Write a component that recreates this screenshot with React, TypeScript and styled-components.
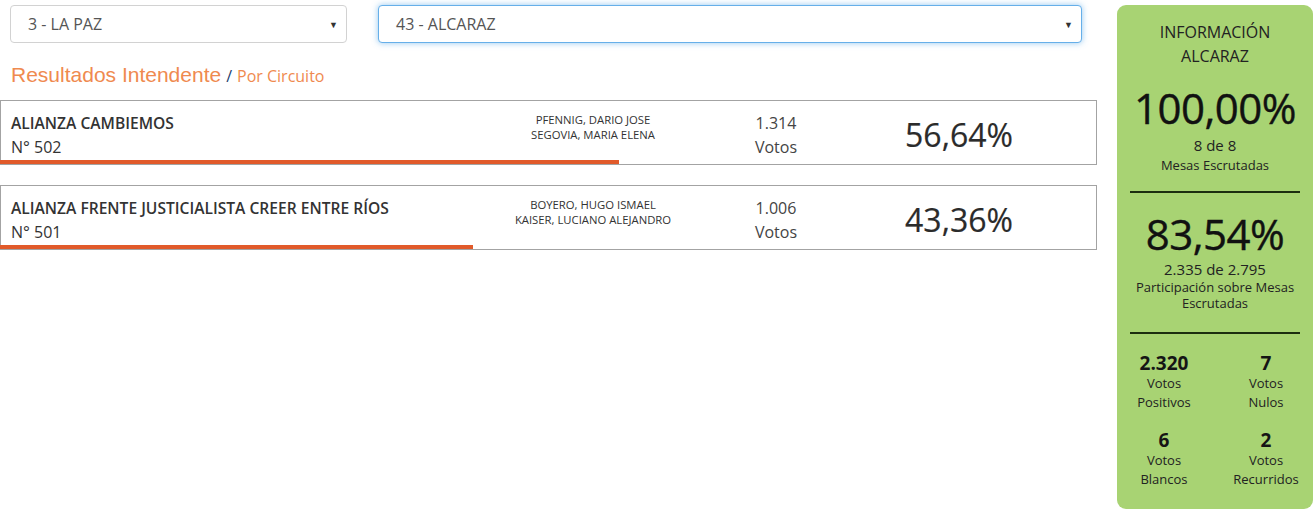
import React from "react";
import styled, { createGlobalStyle } from "styled-components";

const GlobalStyle = createGlobalStyle`
  html, body { margin: 0; padding: 0; background: #fff; }
  body { font-family: "Open Sans", "Liberation Sans", sans-serif; color: #333; }
  * { box-sizing: border-box; }
`;

const Page = styled.div`
  display: flex;
  align-items: flex-start;
  width: 1314px;
  height: 512px;
  overflow: hidden;
`;

const Main = styled.div`
  width: 1097px;
  display: flex;
  flex-direction: column;
`;

const SelectRow = styled.div`
  display: flex;
  padding: 5px 0 0 10px;
  gap: 31px;
`;

const SelectBox = styled.div<{ $w: number; $focus?: boolean }>`
  width: ${(p) => p.$w}px;
  height: 38px;
  display: flex;
  align-items: center;
  justify-content: space-between;
  padding: 0 8px 0 17px;
  border: 1px solid ${(p) => (p.$focus ? "#66afe9" : "#d2d2d2")};
  border-radius: 4px;
  box-shadow: ${(p) =>
    p.$focus ? "0 0 6px rgba(102,175,233,0.7)" : "none"};
  font-size: 16px;
  color: #555;
  background: #fff;
`;

const Arrow = styled.span`
  font-size: 9px;
  color: #333;
  margin-top: 1px;
`;

const Title = styled.div`
  padding: 20px 0 0 11px;
  height: 57px;
  display: flex;
  align-items: baseline;
  gap: 5px;
`;

const TitleMain = styled.span`
  font-family: "Liberation Sans", Arial, sans-serif;
  font-size: 21px;
  color: #ef8a4f;
`;

const TitleSlash = styled.span`
  font-size: 16px;
  color: #24406e;
`;

const TitleSub = styled.span`
  font-size: 16px;
  color: #ef8a4f;
`;

const Cards = styled.div`
  display: flex;
  flex-direction: column;
  gap: 20px;
`;

const Card = styled.div`
  position: relative;
  height: 65px;
  border: 1px solid #a3a3a3;
  display: grid;
  grid-template-columns: 480px 224px 142px 224px 1fr;
  align-items: start;
`;

const Bar = styled.div`
  position: absolute;
  left: -1px;
  bottom: 0;
  height: 4px;
  background: #e15a2a;
`;

const NameCol = styled.div`
  padding: 10px 0 0 10px;
  display: flex;
  flex-direction: column;
  line-height: 24px;
`;

const PartyName = styled.span`
  font-size: 15.6px;
  font-weight: 600;
  color: #333;
`;

const PartyNum = styled.span`
  font-size: 16px;
  color: #333;
`;

const CandCol = styled.div`
  padding-top: 11px;
  display: flex;
  flex-direction: column;
  align-items: center;
  font-size: 11.3px;
  line-height: 15px;
  color: #333;
`;

const VotesCol = styled.div`
  padding-top: 10px;
  display: flex;
  flex-direction: column;
  align-items: center;
  font-size: 16px;
  line-height: 24px;
  color: #444;
`;

const PctCol = styled.div`
  padding-top: 11px;
  text-align: center;
  font-size: 32px;
  line-height: 46px;
  color: #2b2b2b;
  -webkit-text-stroke: 0.2px #2b2b2b;
`;

const Side = styled.aside`
  margin: 5px 0 0 20px;
  width: 196px;
  height: 504px;
  background: #a8d373;
  border-radius: 9px;
  display: flex;
  flex-direction: column;
  align-items: center;
  padding: 15px 11px 0;
  color: #1c1c1c;
`;

const SideHead = styled.div`
  font-size: 16px;
  line-height: 24px;
  text-align: center;
  color: #222;
`;

const BigPct = styled.div<{ $mt: number }>`
  margin-top: ${(p) => p.$mt}px;
  font-size: 42px;
  line-height: 50px;
  letter-spacing: -0.5px;
  color: #111;
  -webkit-text-stroke: 0.4px #111;
`;

const Sub = styled.div<{ $size: number; $lh: number; $mt?: number }>`
  margin-top: ${(p) => p.$mt ?? 0}px;
  font-size: ${(p) => p.$size}px;
  line-height: ${(p) => p.$lh}px;
  text-align: center;
  color: #222;
`;

const Divider = styled.hr<{ $mt: number }>`
  width: 170px;
  margin: ${(p) => p.$mt}px 0 0;
  border: none;
  border-top: 2px solid #1c2e10;
`;

const StatGrid = styled.div`
  margin-top: 18px;
  display: grid;
  grid-template-columns: repeat(2, 102px);
  row-gap: 17px;
  text-align: center;
`;

const Stat = styled.div`
  display: flex;
  flex-direction: column;
  align-items: center;
`;

const StatNum = styled.span`
  font-size: 19px;
  font-weight: 700;
  line-height: 22px;
  color: #151515;
`;

const StatLabel = styled.span`
  font-size: 13px;
  line-height: 19px;
  color: #222;
`;

const BAR_BASE = 1092;

const results = [
  {
    name: "ALIANZA CAMBIEMOS",
    num: "502",
    cands: ["PFENNIG, DARIO JOSE", "SEGOVIA, MARIA ELENA"],
    votes: "1.314",
    pct: "56,64%",
    frac: 0.5664,
  },
  {
    name: "ALIANZA FRENTE JUSTICIALISTA CREER ENTRE RÍOS",
    num: "501",
    cands: ["BOYERO, HUGO ISMAEL", "KAISER, LUCIANO ALEJANDRO"],
    votes: "1.006",
    pct: "43,36%",
    frac: 0.4336,
  },
];

const stats = [
  { n: "2.320", a: "Votos", b: "Positivos" },
  { n: "7", a: "Votos", b: "Nulos" },
  { n: "6", a: "Votos", b: "Blancos" },
  { n: "2", a: "Votos", b: "Recurridos" },
];

export default function App() {
  return (
    <>
      <GlobalStyle />
      <Page>
        <Main>
          <SelectRow>
            <SelectBox $w={337}>
              <span>3 - LA PAZ</span>
              <Arrow>▼</Arrow>
            </SelectBox>
            <SelectBox $w={704} $focus>
              <span>43 - ALCARAZ</span>
              <Arrow>▼</Arrow>
            </SelectBox>
          </SelectRow>
          <Title>
            <TitleMain>Resultados Intendente</TitleMain>
            <TitleSlash>/</TitleSlash>
            <TitleSub>Por Circuito</TitleSub>
          </Title>
          <Cards>
            {results.map((r) => (
              <Card key={r.num}>
                <NameCol>
                  <PartyName>{r.name}</PartyName>
                  <PartyNum>N° {r.num}</PartyNum>
                </NameCol>
                <CandCol>
                  {r.cands.map((c) => (
                    <span key={c}>{c}</span>
                  ))}
                </CandCol>
                <VotesCol>
                  <span>{r.votes}</span>
                  <span>Votos</span>
                </VotesCol>
                <PctCol>{r.pct}</PctCol>
                <Bar style={{ width: `${r.frac * BAR_BASE}px` }} />
              </Card>
            ))}
          </Cards>
        </Main>
        <Side>
          <SideHead>
            INFORMACIÓN
            <br />
            ALCARAZ
          </SideHead>
          <BigPct $mt={15}>100,00%</BigPct>
          <Sub $size={15} $lh={22} $mt={1}>
            8 de 8
          </Sub>
          <Sub $size={13} $lh={18}>
            Mesas Escrutadas
          </Sub>
          <Divider $mt={17} />
          <BigPct $mt={16}>83,54%</BigPct>
          <Sub $size={15} $lh={20}>
            2.335 de 2.795
          </Sub>
          <Sub $size={13} $lh={16}>
            Participación sobre Mesas
            <br />
            Escrutadas
          </Sub>
          <Divider $mt={21} />
          <StatGrid>
            {stats.map((s) => (
              <Stat key={s.b}>
                <StatNum>{s.n}</StatNum>
                <StatLabel>{s.a}</StatLabel>
                <StatLabel>{s.b}</StatLabel>
              </Stat>
            ))}
          </StatGrid>
        </Side>
      </Page>
    </>
  );
}
